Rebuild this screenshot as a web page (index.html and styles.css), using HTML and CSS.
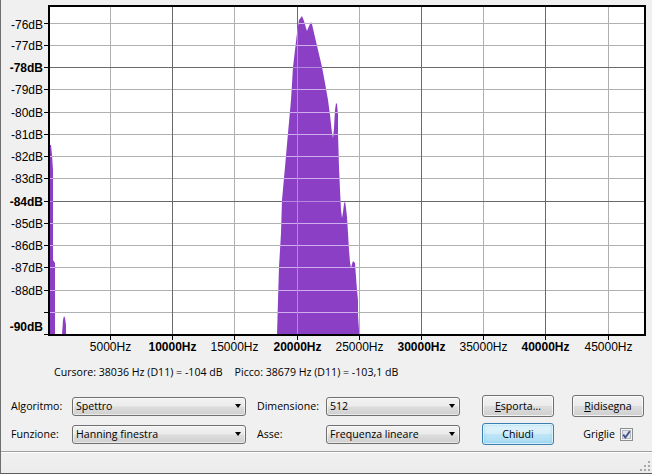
FILE: index.html
```html
<!DOCTYPE html>
<html lang="it">
<head>
<meta charset="utf-8">
<title>Analisi della frequenza</title>
<link rel="stylesheet" href="styles.css">
</head>
<body>
<div class="window">
  <svg class="chart" width="651" height="358" viewBox="1 0 651 358" xmlns="http://www.w3.org/2000/svg">
    <defs>
      <pattern id="specfill" patternUnits="userSpaceOnUse" x="0" y="0" width="652" height="358">
        <rect class="spec-bg" x="0" y="0" width="652" height="358"/>
        <path class="grid-in-light" d="M50 23.5H644M50 45.5H644M50 89.5H644M50 112.5H644M50 134.5H644M50 156.5H644M50 178.5H644M50 223.5H644M50 245.5H644M50 267.5H644M50 290.5H644M50 312.5H644M110.5 7V334M234.5 7V334M359.5 7V334M483.5 7V334M608.5 7V334"/>
        <path class="grid-in-dark" d="M50 67.5H644M50 201.5H644M172.5 7V334M297.5 7V334M421.5 7V334M545.5 7V334"/>
      </pattern>
    </defs>
    <rect class="plot-bg" x="50" y="7" width="594" height="327"/>
    <path class="grid-light" d="M50 23.5H644M50 45.5H644M50 89.5H644M50 112.5H644M50 134.5H644M50 156.5H644M50 178.5H644M50 223.5H644M50 245.5H644M50 267.5H644M50 290.5H644M50 312.5H644M110.5 7V334M234.5 7V334M359.5 7V334M483.5 7V334M608.5 7V334"/>
    <path class="grid-dark" d="M50 67.5H644M50 201.5H644M172.5 7V334M297.5 7V334M421.5 7V334M545.5 7V334"/>
    <g class="spectrum">
      <polygon points="277,335 278,300 279,267 281,233 282,200 285,167 288,133 291,100 293,67 295,50 297,33 299,20 302,16 304,21 306,28 307,31 309,26 311,22 312,24 314,33 318,50 322,67 325,83 328,100 330,115 332,133 333,138 334,128 335,110 336,103 337,104 338,115 338,133 339,167 340,190 341,210 342,218 343,212 344,204 345,201 346,208 347,217 348,233 349,250 350,262 351,268 352,264 353,261 355,263 356,277 357,290 358,300 358,315 359,330 359,335"/>
      <polygon points="49,335 49,145 51,145 52,155 53,170 53,260 55,263 55,335"/>
      <polygon points="62,335 63,320 64,316 65,318 66,325 66,335"/>
    </g>
    <rect class="plot-border" x="49" y="6" width="596" height="329"/>
    <path class="ticks" d="M44 23.5H48M44 45.5H48M44 67.5H48M44 89.5H48M44 112.5H48M44 134.5H48M44 156.5H48M44 178.5H48M44 201.5H48M44 223.5H48M44 245.5H48M44 267.5H48M44 290.5H48M44 312.5H48M44 334.5H48M110.5 336V340M172.5 336V340M234.5 336V340M297.5 336V340M359.5 336V340M421.5 336V340M483.5 336V340M545.5 336V340M608.5 336V340"/>
    <g class="ylabels">
      <text x="43" y="29">-76dB</text>
      <text x="43" y="50">-77dB</text>
      <text x="43" y="72" class="bold">-78dB</text>
      <text x="43" y="94">-79dB</text>
      <text x="43" y="117">-80dB</text>
      <text x="43" y="139">-81dB</text>
      <text x="43" y="161">-82dB</text>
      <text x="43" y="183">-83dB</text>
      <text x="43" y="206" class="bold">-84dB</text>
      <text x="43" y="228">-85dB</text>
      <text x="43" y="250">-86dB</text>
      <text x="43" y="272">-87dB</text>
      <text x="43" y="295">-88dB</text>
      <text x="43" y="331" class="bold">-90dB</text>
    </g>
    <g class="xlabels">
      <text x="110.5" y="351">5000Hz</text>
      <text x="172.5" y="351" class="bold">10000Hz</text>
      <text x="234.5" y="351">15000Hz</text>
      <text x="297.5" y="351" class="bold">20000Hz</text>
      <text x="359.5" y="351">25000Hz</text>
      <text x="421.5" y="351" class="bold">30000Hz</text>
      <text x="483.5" y="351">35000Hz</text>
      <text x="545.5" y="351" class="bold">40000Hz</text>
      <text x="608.5" y="351">45000Hz</text>
    </g>
  </svg>

  <div class="readout">
    <span>Cursore: 38036 Hz (D11) = -104 dB</span>
    <span>Picco: 38679 Hz (D11) = -103,1 dB</span>
  </div>

  <div class="controls">
    <span class="label">Algoritmo:</span>
    <div class="combo"><span>Spettro</span><i class="arrow"></i></div>
    <span class="label label-mid">Dimensione:</span>
    <div class="combo"><span>512</span><i class="arrow"></i></div>
    <div class="btn-cell"><button class="btn"><u>E</u>sporta...</button></div>
    <div class="btn-cell"><button class="btn"><u>R</u>idisegna</button></div>

    <span class="label">Funzione:</span>
    <div class="combo"><span>Hanning finestra</span><i class="arrow"></i></div>
    <span class="label label-mid">Asse:</span>
    <div class="combo"><span>Frequenza lineare</span><i class="arrow"></i></div>
    <div class="btn-cell"><button class="btn btn-default">Chiudi</button></div>
    <label class="check-cell">
      <span>Griglie</span>
      <svg class="checkbox" width="13" height="13" viewBox="0 0 13 13">
        <rect x="0.5" y="0.5" width="12" height="12" fill="#f4f4f4" stroke="#8e8f8f"/>
        <rect x="2.5" y="2.5" width="8" height="8" fill="#e1e4ea" stroke="#b6bac4"/>
        <path d="M3.2 6.6 L5.4 9.4 L9.8 3.2" fill="none" stroke="#3e5288" stroke-width="1.8"/>
      </svg>
    </label>
  </div>

  <div class="statusbar">
    <svg class="grip" width="10" height="10" viewBox="0 0 10 10">
      <g fill="#a7a7a7">
        <rect x="8" y="0" width="2" height="2"/>
        <rect x="8" y="4" width="2" height="2"/>
        <rect x="4" y="4" width="2" height="2"/>
        <rect x="8" y="8" width="2" height="2"/>
        <rect x="4" y="8" width="2" height="2"/>
        <rect x="0" y="8" width="2" height="2"/>
      </g>
    </svg>
  </div>
</div>
</body>
</html>
```

FILE: styles.css
```css
* {
  box-sizing: border-box;
  margin: 0;
  padding: 0;
}

html,
body {
  width: 652px;
  height: 474px;
  overflow: hidden;
  background: #f0f0f0;
}

body {
  font-family: "Open Sans", "Noto Sans", sans-serif;
  font-size: 10.6px;
  color: #000;
}

.window {
  width: 652px;
  height: 474px;
  border-left: 1px solid #6e6e6e;
  border-bottom: 1px solid #5c5c5c;
  display: flex;
  flex-direction: column;
}

/* chart */
.chart {
  display: block;
  flex: none;
}

.plot-bg {
  fill: #ffffff;
}

.grid-light {
  fill: none;
  stroke: #b0b0b0;
  stroke-width: 1;
}

.grid-dark {
  fill: none;
  stroke: #6a6a6a;
  stroke-width: 1;
}

.spec-bg {
  fill: #8a3fc5;
}

.spectrum polygon {
  fill: url(#specfill);
}

.grid-in-light {
  fill: none;
  stroke: #cfaef0;
  stroke-width: 1;
}

.grid-in-dark {
  fill: none;
  stroke: #b48ade;
  stroke-width: 1;
}

.plot-border {
  fill: none;
  stroke: #000;
  stroke-width: 2;
}

.ticks {
  fill: none;
  stroke: #000;
  stroke-width: 1;
}

.ylabels text,
.xlabels text {
  font-family: "Liberation Sans", Arial, sans-serif;
  font-size: 12px;
  fill: #000;
}

.ylabels text {
  text-anchor: end;
}

.xlabels text {
  text-anchor: middle;
}

.chart .bold {
  font-weight: bold;
}

/* readout */
.readout {
  flex: none;
  height: 28px;
  padding-left: 53px;
  display: flex;
  align-items: center;
  gap: 12px;
  white-space: nowrap;
}

/* controls */
.controls {
  flex: none;
  margin-top: 9px;
  padding-left: 10px;
  display: grid;
  grid-template-columns: 61px 174px 80px 134px 94px 90px;
  grid-template-rows: 22px 22px;
  row-gap: 6px;
  align-items: center;
}

.label {
  white-space: nowrap;
}

.label-mid {
  padding-left: 11px;
}

.combo {
  height: 19px;
  border: 1px solid #707070;
  border-radius: 3px;
  background: linear-gradient(#f2f2f2 0%, #ebebeb 48%, #dddddd 52%, #cfcfcf 100%);
  box-shadow: inset 0 0 0 1px rgba(255, 255, 255, 0.55);
  display: flex;
  align-items: center;
  justify-content: space-between;
  padding: 0 4px 0 3px;
  white-space: nowrap;
}

.arrow {
  width: 0;
  height: 0;
  border-top: 4px solid #000;
  border-left: 3.5px solid transparent;
  border-right: 3.5px solid transparent;
}

.btn-cell {
  display: flex;
  justify-content: flex-end;
}

.btn {
  width: 72px;
  height: 22px;
  border: 1px solid #707070;
  border-radius: 3px;
  background: linear-gradient(#f2f2f2 0%, #ebebeb 48%, #dddddd 52%, #cfcfcf 100%);
  box-shadow: inset 0 0 0 1px rgba(255, 255, 255, 0.7);
  font-family: inherit;
  font-size: inherit;
  color: #000;
  text-align: center;
}

.btn-default {
  border-color: #3c7fb1;
  background: linear-gradient(#e3f4fc 0%, #d3eef9 48%, #bfe5f6 52%, #a9dbf2 100%);
  box-shadow: inset 0 0 0 1px rgba(255, 255, 255, 0.6), inset 0 0 3px 1px rgba(112, 200, 238, 0.6);
}

.check-cell {
  display: flex;
  justify-content: flex-end;
  align-items: center;
  gap: 5px;
  padding-right: 11px;
}

.checkbox {
  display: block;
}

/* status bar */
.statusbar {
  margin-top: auto;
  height: 22px;
  border-top: 1px solid #a0a0a0;
  background: linear-gradient(#f0f0f0, #ececec);
  box-shadow: inset 0 1px #ffffff;
  display: flex;
  justify-content: flex-end;
  align-items: flex-end;
  padding: 0 2px 2px 0;
}

.grip {
  display: block;
}
```
